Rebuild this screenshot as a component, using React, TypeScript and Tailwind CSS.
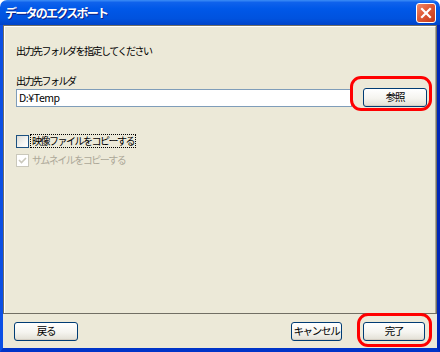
import { FC, ReactNode } from 'react';

const XpButton: FC<{ children: ReactNode; className?: string }> = ({ children, className = '' }) => (
  <button
    className={`flex h-[19px] items-center justify-center whitespace-nowrap rounded-[3px] border border-[#003C74] bg-[linear-gradient(to_bottom,#FFFFFF_0%,#F5F4EF_55%,#E2DFD4_100%)] text-[10.5px] leading-none tracking-[-1.25px] text-black shadow-[inset_0_-1px_0_#D6D0C5] ${className}`}
  >
    {children}
  </button>
);

const Highlight: FC<{ className: string }> = ({ className }) => (
  <div className={`pointer-events-none absolute rounded-[11px] border-[3px] border-[#FF0000] ${className}`} />
);

const App: FC = () => {
  return (
    <div className="h-[352px] w-[440px] bg-white font-['Noto_Sans_CJK_JP',sans-serif]">
      <div className="relative flex h-full w-full flex-col">
        {/* title bar */}
        <div className="flex h-[25px] items-center justify-between rounded-t-[7px] bg-[linear-gradient(to_bottom,#3C8DF6_0%,#0F62EC_10%,#0058E8_35%,#0052DE_75%,#0043C9_100%)] pr-[4px] pl-[5px]">
          <span className="text-[12px] font-bold leading-none tracking-[-1.75px] text-white [text-shadow:1px_1px_0_#0A1E85]">
            データのエクスポート
          </span>
          <div className="flex h-[20px] w-[20px] items-center justify-center rounded-[3px] border border-white bg-[linear-gradient(135deg,#EE8A6E_0%,#E05A36_45%,#C5391A_100%)]">
            <svg width="12" height="12" viewBox="0 0 12 12">
              <path d="M2 2 L10 10 M10 2 L2 10" stroke="white" strokeWidth="2.2" strokeLinecap="square" />
            </svg>
          </div>
        </div>

        {/* client */}
        <div className="flex flex-1 flex-col border-r-[3px] border-b-[4px] border-l-[3px] border-r-[#0026B8] border-b-[#0034C8] border-l-[#0B4FE4] bg-[#ECE9D8]">
          {/* wizard page */}
          <div className="flex h-[289px] flex-col border border-[#716F64]">
            <div className="flex flex-1 flex-col border-t border-r border-l border-t-white border-r-[#ACA899] border-l-white pr-[8px] pl-[11px] text-[10px] leading-[14px] tracking-[-1.5px] text-black">
              <p className="mt-[17px]">出力先フォルダを指定してください</p>

              <p className="mt-[16px]">出力先フォルダ</p>
              <div className="flex items-center">
                <div className="flex h-[18px] w-[336px] items-center border border-[#7F9DB9] bg-white pl-[2px] text-[10.5px] tracking-[-0.4px]">
                  D:¥Temp
                </div>
                <XpButton className="ml-[11px] w-[64px]">参照</XpButton>
              </div>

              <div className="mt-[27px] flex items-center">
                <span className="h-[13px] w-[13px] border border-[#1C5180] bg-[linear-gradient(135deg,#DCDCD7_0%,#F5F5F2_60%,#FFFFFF_100%)]" />
                <span className="ml-[1px] border border-dotted border-black px-[1px] leading-[12px]">
                  映像ファイルをコピーする
                </span>
              </div>
              <div className="mt-[5px] flex items-center text-[#ACA899]">
                <span className="flex h-[13px] w-[13px] items-center justify-center border border-[#CAC8BB] bg-white">
                  <svg width="9" height="9" viewBox="0 0 9 9">
                    <path d="M1 4 L3.5 6.5 L8 2" stroke="#CAC8BB" strokeWidth="1.6" fill="none" />
                  </svg>
                </span>
                <span className="ml-[3px]">サムネイルをコピーする</span>
              </div>
            </div>
          </div>

          {/* button bar */}
          <div className="flex flex-1 items-center pr-[12px] pl-[11px]">
            <XpButton className="w-[64px]">戻る</XpButton>
            <div className="flex-1" />
            <XpButton className="w-[51px]">キャンセル</XpButton>
            <XpButton className="ml-[21px] w-[62px]">完了</XpButton>
          </div>
        </div>

        <Highlight className="top-[76px] left-[350px] h-[35px] w-[82px]" />
        <Highlight className="top-[313px] left-[357px] h-[34px] w-[75px]" />
      </div>
    </div>
  );
};

export default App;
